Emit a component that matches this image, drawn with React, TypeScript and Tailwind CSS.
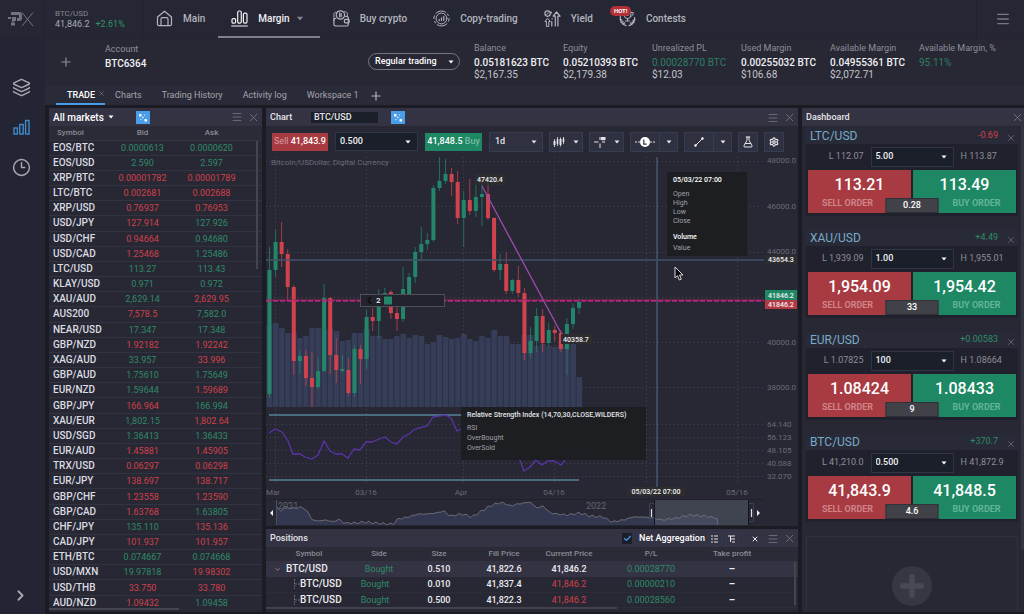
import React from "react";
import { Layers, Menu, X, Plus, ChevronRight, ChevronDown, Clock3, Check, Settings, FlaskConical } from "lucide-react";

// ---------------------------------------------------------------------------
// Types
// ---------------------------------------------------------------------------
type Quote = [symbol: string, bid: string, bidUp: number, ask: string, askUp: number];
// wick top, body top, body bottom, wick bottom, up
type Candle = [number, number, number, number, number];

interface Instrument {
  symbol: string;
  change: string;
  up: boolean;
  low: string;
  high: string;
  size: string;
  sell: string;
  buy: string;
  spread: string;
}

// ---------------------------------------------------------------------------
// Data
// ---------------------------------------------------------------------------
const QUOTES: Quote[] = [
  ["EOS/BTC", "0.0000613", 1, "0.0000620", 1],
  ["EOS/USD", "2.590", 1, "2.597", 1],
  ["XRP/BTC", "0.00001782", 0, "0.00001789", 0],
  ["LTC/BTC", "0.002681", 0, "0.002688", 0],
  ["XRP/USD", "0.76937", 0, "0.76953", 0],
  ["USD/JPY", "127.914", 0, "127.926", 1],
  ["USD/CHF", "0.94664", 0, "0.94680", 1],
  ["USD/CAD", "1.25468", 0, "1.25486", 1],
  ["LTC/USD", "113.27", 1, "113.43", 1],
  ["KLAY/USD", "0.971", 1, "0.972", 1],
  ["XAU/AUD", "2,629.14", 1, "2,629.95", 0],
  ["AUS200", "7,578.5", 0, "7,582.0", 1],
  ["NEAR/USD", "17.347", 1, "17.348", 1],
  ["GBP/NZD", "1.92182", 0, "1.92242", 0],
  ["XAG/AUD", "33.957", 1, "33.996", 0],
  ["GBP/AUD", "1.75610", 1, "1.75649", 1],
  ["EUR/NZD", "1.59644", 1, "1.59689", 0],
  ["GBP/JPY", "166.964", 0, "166.994", 1],
  ["XAU/EUR", "1,802.15", 1, "1,802.64", 0],
  ["USD/SGD", "1.36413", 1, "1.36433", 1],
  ["EUR/AUD", "1.45881", 0, "1.45905", 0],
  ["TRX/USD", "0.06297", 0, "0.06298", 0],
  ["EUR/JPY", "138.697", 0, "138.717", 0],
  ["GBP/CHF", "1.23558", 0, "1.23590", 0],
  ["GBP/CAD", "1.63768", 0, "1.63805", 1],
  ["CHF/JPY", "135.110", 1, "135.136", 0],
  ["CAD/JPY", "101.937", 0, "101.957", 0],
  ["ETH/BTC", "0.074667", 1, "0.074668", 1],
  ["USD/MXN", "19.97818", 1, "19.98302", 0],
  ["USD/THB", "33.750", 0, "33.780", 0],
  ["AUD/NZD", "1.09432", 0, "1.09458", 1],
];

const INSTRUMENTS: Instrument[] = [
  { symbol: "LTC/USD", change: "-0.69", up: false, low: "112.07", high: "113.87", size: "5.00", sell: "113.21", buy: "113.49", spread: "0.28" },
  { symbol: "XAU/USD", change: "+4.49", up: true, low: "1,939.09", high: "1,955.01", size: "1.00", sell: "1,954.09", buy: "1,954.42", spread: "33" },
  { symbol: "EUR/USD", change: "+0.00583", up: true, low: "1.07825", high: "1.08664", size: "100", sell: "1.08424", buy: "1.08433", spread: "9" },
  { symbol: "BTC/USD", change: "+370.7", up: true, low: "41,210.0", high: "41,872.9", size: "0.500", sell: "41,843.9", buy: "41,848.5", spread: "4.6" },
];

const METRICS = [
  { label: "Balance", value: "0.05181623 BTC", usd: "$2,167.35" },
  { label: "Equity", value: "0.05210393 BTC", usd: "$2,179.38" },
  { label: "Unrealized PL", value: "0.00028770 BTC", usd: "$12.03", green: true },
  { label: "Used Margin", value: "0.00255032 BTC", usd: "$106.68" },
  { label: "Available Margin", value: "0.04955361 BTC", usd: "$2,072.71" },
  { label: "Available Margin, %", value: "95.11%", usd: "", green: true },
];

const POSITIONS = [
  { size: "0.510", fill: "41,822.6", current: "41,846.2", pl: "0.00028770", parent: true },
  { size: "0.010", fill: "41,837.4", current: "41,846.2", pl: "0.00000210", parent: false },
  { size: "0.500", fill: "41,822.3", current: "41,846.2", pl: "0.00028560", parent: false },
];

const CANDLES: Candle[] = [
  [90, 113, 237, 241, 1], [73, 85, 113, 120, 1], [65, 85, 97, 110, 0], [92, 97, 130, 143, 0],
  [128, 130, 204, 218, 0], [194, 199, 204, 217, 1], [193, 199, 221, 229, 0], [195, 221, 230, 250, 0],
  [200, 214, 230, 232, 1], [127, 141, 214, 215, 1], [140, 141, 198, 217, 0], [181, 198, 213, 226, 0],
  [198, 212, 214, 216, 1], [201, 213, 236, 239, 0], [188, 192, 236, 240, 1], [188, 192, 202, 227, 0],
  [153, 160, 202, 212, 1], [151, 160, 164, 174, 0], [132, 137, 164, 181, 1], [131, 136, 140, 143, 1],
  [133, 135, 156, 162, 0], [150, 156, 162, 174, 0], [110, 132, 162, 165, 1], [116, 120, 138, 141, 1],
  [90, 95, 120, 126, 1], [70, 87, 95, 103, 1], [76, 83, 87, 93, 1], [28, 31, 83, 85, 1],
  [0, 24, 31, 34, 1], [2, 17, 24, 27, 1], [11, 17, 25, 39, 0], [14, 25, 61, 67, 0],
  [34, 43, 61, 90, 1], [22, 43, 54, 58, 0], [17, 40, 54, 60, 1], [28, 37, 40, 69, 1],
  [26, 37, 61, 63, 0], [60, 61, 113, 115, 0], [97, 107, 113, 123, 1], [95, 107, 134, 137, 0],
  [122, 123, 134, 137, 1], [109, 123, 136, 140, 0], [131, 136, 196, 203, 0], [170, 184, 196, 201, 1],
  [151, 159, 184, 195, 1], [152, 159, 186, 195, 0], [166, 173, 186, 190, 1], [169, 173, 176, 184, 0],
  [173, 176, 192, 195, 0], [161, 167, 192, 218, 1], [146, 151, 167, 172, 1], [142, 145, 151, 157, 1],
];

const VOLUME_TOPS = [
  168, 166, 171, 176, 176, 181, 179, 171, 171, 172, 172, 174, 184, 183, 176, 176, 172, 179, 179, 182, 182, 179, 177,
  181, 178, 179, 187, 185, 178, 180, 182, 181, 177, 182, 184, 179, 181, 173, 179, 179, 187, 187, 178, 178, 189, 187,
  189, 190, 188, 188, 187, 220,
];

const RSI =
  "3,276 9,272 16,275 22,284 27,297 34,297 39,300 46,302 52,298 58,284 64,294 70,297 76,297 82,301 88,292 94,293 100,285 106,285 113,282 119,280 125,285 131,287 137,280 143,277 149,272 161,269 167,260 179,258 185,261 191,274 196,272 204,270 216,269 224,285 234,295 241,301 246,298 253,301 258,314 264,310 270,303 276,308 282,304 288,304 295,308 301,301 307,296 313,292";

const HISTORY: [number, number][] = [
  [11, 350], [14, 355], [18, 350], [24, 351], [30, 351], [36, 350], [42, 355], [46, 363], [52, 364], [60, 363], [68, 365],
  [72, 362], [78, 366], [90, 366], [98, 365], [110, 366], [120, 367], [127, 367], [132, 362], [142, 360], [152, 357],
  [160, 357], [170, 356], [178, 354], [184, 359], [196, 357], [206, 360], [214, 355], [224, 349], [232, 346], [238, 346],
  [244, 349], [252, 347], [264, 345], [271, 351], [277, 349], [284, 356], [291, 357], [301, 358], [314, 356], [324, 359],
  [337, 360], [346, 365], [357, 363], [367, 360], [377, 360], [387, 361], [396, 363], [411, 361], [424, 358], [437, 359],
  [451, 361],
];

const STEP = 6.07;

// roughen the overview curve between its key points
function historyLine() {
  const out: string[] = [];
  for (let x = 11; x <= 451; x += 2) {
    let i = HISTORY.findIndex((p) => p[0] >= x);
    if (i < 1) i = 1;
    const [x0, y0] = HISTORY[i - 1];
    const [x1, y1] = HISTORY[i];
    const y = y0 + ((y1 - y0) * (x - x0)) / (x1 - x0);
    out.push(`${x},${(y + Math.sin(x * 2.3) * 0.6 + Math.sin(x * 0.9) * 0.6).toFixed(1)}`);
  }
  return out.join(" ");
}

// ---------------------------------------------------------------------------
// Icons
// ---------------------------------------------------------------------------
function Icon({ children, className = "size-[17px]" }: { children: React.ReactNode; className?: string }) {
  return (
    <svg viewBox="0 0 17 17" className={`shrink-0 ${className}`} fill="none" stroke="currentColor" strokeWidth="1.2" strokeLinecap="round" strokeLinejoin="round" aria-hidden="true">
      {children}
    </svg>
  );
}

const HomeIcon = () => (
  <Icon>
    <path d="M1.5 7 8.5 1.2 15.5 7v7.2a1.4 1.4 0 0 1-1.4 1.4H2.9a1.4 1.4 0 0 1-1.4-1.4z" />
    <path d="M5 15.4V9.2a1.5 1.5 0 0 1 1.5-1.5h4A1.5 1.5 0 0 1 12 9.2v6.2" />
  </Icon>
);

const MarginIcon = () => (
  <Icon>
    <rect x="1" y="8.6" width="3.6" height="4.6" rx="1.2" />
    <rect x="6.7" y="1" width="3.6" height="12.2" rx="1.4" />
    <rect x="12.4" y="3.2" width="3.6" height="10" rx="1.4" />
    <path d="M.7 16h15.6" />
  </Icon>
);

const WalletIcon = () => (
  <Icon>
    <path d="M2.6 8.4A1.6 1.6 0 0 0 .9 10v4.3A1.7 1.7 0 0 0 2.6 16h11.2a1.5 1.5 0 0 0 1.5-1.5V8a1.6 1.6 0 0 0-1.6-1.6h-1" />
    <circle cx="7.4" cy="5" r="4.2" />
    <path d="M6.5 3.2v3.6M6.5 3.2h1.2a.9.9 0 0 1 0 1.8H6.5m0 0H8a.9.9 0 0 1 0 1.8H6.5M11.5 1.6c2 0 2.9 1 2.9 2.4v2.4M.9 10.5V4.6c0-1.4.6-2.2 2-2.6" strokeWidth=".9" />
    <rect x="11.4" y="9.4" width="4.8" height="3.4" rx="1" />
  </Icon>
);

const CopyIcon = () => (
  <Icon>
    <circle cx="8.5" cy="8.5" r="5.4" strokeWidth="1" />
    <path d="M3 3.2a7.6 7.6 0 0 1 9.7-1M14 13.8a7.6 7.6 0 0 1-9.7 1M.9 8.5c0-1 .2-1.9.5-2.7M16.1 8.5c0 1-.2 1.9-.5 2.7M14.5 4l.8 1.5M2.5 13l-.8-1.5" strokeWidth="1" />
    <path d="M6.2 10.6V9.4M8.5 10.6V7.8M10.8 10.6V6.4" />
  </Icon>
);

const YieldIcon = () => (
  <Icon>
    <circle cx="3.6" cy="3.6" r="2.7" />
    <path d="m2.6 4.6 2-2" strokeWidth=".9" />
    <path d="M2.4 16v-4.5H.9l2.7-3.3 2.7 3.3H4.8V16z" strokeWidth="1" />
    <path d="M11.3 16V6.2H9.1L12.6 2l3.5 4.2h-2.2V16" />
    <path d="M7.8 16v-4.5M8.1 8.7v.2M7.3 2v1" />
  </Icon>
);

const ContestIcon = () => (
  <Icon>
    <path d="M5.2 1.5h6.6v3.8a3.3 3.3 0 0 1-6.6 0zM8.5 8.6v2.2M6.5 11h4M12 2.5h2.3c0 2.3-.8 3.6-2.6 3.8" strokeWidth="1" />
    <path d="m7.3 4 1.2-1 1.2 1-.4 1.5H7.7z" strokeWidth=".8" />
    <path d="M1.4 6.6c-.6 4.2 1.6 7.6 5.6 9M15.6 7.6c.2 3.8-2 6.8-5.6 8M1 9.2l2 .9M2 12.2l2.3-.3M4 14.4l1.7-1.6M16 9.8l-2 .8M15 12.6l-2.2-.4M13 14.6l-1.5-1.5" />
  </Icon>
);

const LinkBadge = () => (
  <button aria-label="Link panels" className="grid h-[13px] w-3.5 place-items-center bg-[#4a9de8] text-white">
    <svg viewBox="0 0 14 13" className="h-[13px] w-3.5" fill="currentColor">
      <rect x="3" y="3" width="2.5" height="2.5" rx=".6" />
      <rect x="8.5" y="8" width="2.5" height="2.5" rx=".6" />
      <rect x="6.2" y="5.8" width="1.4" height="1.4" rx=".4" />
      <rect x="8" y="3.5" width="1.2" height="1.2" opacity=".7" />
      <rect x="4.2" y="8" width="1.2" height="1.2" opacity=".7" />
    </svg>
  </button>
);

const Caret = ({ className = "h-1 w-1.5" }: { className?: string }) => (
  <svg viewBox="0 0 6 4" className={`shrink-0 ${className}`} fill="currentColor" aria-hidden="true">
    <path d="M.5.5h5L3 3.5z" />
  </svg>
);

function PanelActions({ menu = true, className = "ml-auto pr-0.5" }: { menu?: boolean; className?: string }) {
  return (
    <div className={`flex items-center gap-1 text-[#7b7b88] ${className}`}>
      {menu && (
        <button aria-label="Panel menu">
          <Menu size={12} strokeWidth={1.5} />
        </button>
      )}
      <button aria-label="Close panel">
        <X size={13} strokeWidth={1.5} />
      </button>
    </div>
  );
}

function Dropdown({ label, value, className }: { label: string; value: string; className: string }) {
  return (
    <div className={`relative ${className}`}>
      <select aria-label={label} defaultValue={value} className="block h-full w-full appearance-none border border-[#2e3547] bg-[#1b1f29] pl-1 text-[9px] font-medium text-[#f0f0f4]">
        <option>{value}</option>
      </select>
      <Caret className="pointer-events-none absolute right-[7px] top-2 h-1 w-1.5 text-white" />
    </div>
  );
}

// ---------------------------------------------------------------------------
// Header
// ---------------------------------------------------------------------------
const NAV = [
  { label: "Main", icon: HomeIcon },
  { label: "Margin", icon: MarginIcon, active: true },
  { label: "Buy crypto", icon: WalletIcon },
  { label: "Copy-trading", icon: CopyIcon },
  { label: "Yield", icon: YieldIcon },
  { label: "Contests", icon: ContestIcon, hot: true },
];

function Header() {
  return (
    <header className="flex h-[38px] shrink-0 bg-[#262735]">
      <a href="#" aria-label="Home page" className="flex w-[45px] items-center border-r border-[#20212d] pl-2 text-[#747480]">
        <svg viewBox="0 0 26 16" className="h-4 w-[26px]" fill="currentColor" aria-hidden="true">
          <path d="M3 1h8a3 3 0 0 1 3 3v3a3 3 0 0 1-3 3H9V7h2V4H3z" />
          <rect x="0" y="6" width="3" height="2" />
          <path d="M4 6h4v4H6v1H4z" />
          <rect x="3" y="11.5" width="4" height="3" />
          <path d="M14 1.5 25 15M25 1.5 14 15" fill="none" stroke="currentColor" strokeWidth="1" />
        </svg>
      </a>
      <div className="flex w-[98px] flex-col justify-center border-r border-[#20212d] pl-2.5 text-[9px] leading-[11px] text-[#aaaab2]">
        <span className="text-[8px] text-[#85858f]">BTC/USD</span>
        <span className="flex gap-1.5">
          41,846.2 <span className="text-[#2f9468]">+2.61%</span>
        </span>
      </div>
      <nav className="flex">
        {NAV.map((item) => (
          <a
            key={item.label}
            href="#"
            className={`relative flex items-center gap-2.5 text-[10px] font-medium ${
              item.active ? "border-b-2 border-[#80808b] pl-[13px] pr-4 text-[#f0f0f4]" : "px-[13px] pb-0.5 text-[#b4b4bd]"
            }`}
          >
            <item.icon />
            <span className="flex items-center gap-1.5">
              {item.label}
              {item.active && <Caret className="h-[5px] w-2 text-[#83838e]" />}
            </span>
            {item.hot && (
              <span className="absolute left-1 top-1.5 rounded-full bg-[#b23038] px-1 text-[6px] font-bold leading-[10px] text-white">HOT!</span>
            )}
          </a>
        ))}
      </nav>
      <button aria-label="Menu" className="ml-auto grid w-12 place-items-center border-l border-[#20212d] pl-1 text-[#787883]">
        <Menu size={16} strokeWidth={2} />
      </button>
    </header>
  );
}

function Sidebar() {
  return (
    <aside className="flex w-[45px] shrink-0 flex-col items-center bg-[#242534] pb-2.5 pr-0.5 pt-10 text-[#a9a9b4]">
      <button aria-label="Layouts">
        <Layers size={19} strokeWidth={1.8} />
      </button>
      <button aria-label="Charts" className="mt-[22px] text-[#4089c8]">
        <svg viewBox="0 0 17 17" className="size-[17px]" fill="none" stroke="currentColor" strokeWidth="1.4">
          <rect x="1" y="9" width="3.4" height="6" />
          <rect x="6.8" y="5.5" width="3.4" height="9.5" />
          <rect x="12.6" y="1.5" width="3.4" height="13.5" />
        </svg>
      </button>
      <button aria-label="History" className="mt-[22px]">
        <Clock3 size={19} strokeWidth={1.8} />
      </button>
      <button aria-label="Expand sidebar" className="mt-auto pr-0.5">
        <ChevronRight size={17} strokeWidth={2.5} />
      </button>
    </aside>
  );
}

function AccountBar() {
  return (
    <div className="flex h-12 shrink-0 border-t border-[#232430] bg-[#272834]">
      <button aria-label="Add account" className="ml-3.5 mt-4 self-start text-[#90909a]">
        <Plus size={14} strokeWidth={2} />
      </button>
      <div className="ml-8 mt-1 text-[9px] leading-3 text-[#8f8f99]">
        Account
        <div className="pt-[3px] text-[10px] font-medium text-[#f0f0f4]">BTC6364</div>
      </div>
      <div className="relative ml-auto mr-3.5 mt-3.5 h-[17px] w-[92px]">
        <select aria-label="Trading mode" className="block h-full w-full appearance-none rounded-full border border-[#75757f] pl-1.5 text-[9px] font-medium text-white">
          <option>Regular trading</option>
        </select>
        <Caret className="pointer-events-none absolute right-1.5 top-[7px] h-1 w-1.5 text-white" />
      </div>
      <dl className="flex pr-4 pt-[3px]">
        {METRICS.map((m) => (
          <div key={m.label} className="w-[89px] whitespace-nowrap text-[10px] leading-3">
            <dt className="pb-[3px] text-[9px] text-[#8f8f99]">{m.label}</dt>
            <dd className={m.green ? "text-[#2c7f61]" : "font-medium text-[#f0f0f4]"}>{m.value}</dd>
            <dd className="text-[#c4c4cb]">{m.usd}</dd>
          </div>
        ))}
      </dl>
    </div>
  );
}

function Tabs() {
  return (
    <div className="flex h-[19px] shrink-0 items-stretch bg-[#2a2b38] pl-[11px] text-[9px] text-[#a4a4ad]">
      <button className="flex items-center border-b-2 border-[#4a9de8] pl-[11px] pt-0.5 font-medium text-white">
        TRADE
        <X size={7} strokeWidth={2} className="mb-1 ml-[3px] text-[#85858f]" />
      </button>
      {["Charts", "Trading History", "Activity log", "Workspace 1"].map((t) => (
        <button key={t} className="px-2.5">
          {t}
        </button>
      ))}
      <button aria-label="Add workspace" className="text-[#b5b5bd]">
        <Plus size={14} strokeWidth={2} />
      </button>
    </div>
  );
}

// ---------------------------------------------------------------------------
// Markets
// ---------------------------------------------------------------------------
function Markets() {
  return (
    <section className="relative flex w-[213px] shrink-0 flex-col bg-[#272834] pb-0.5">
      <div className="flex h-[18px] shrink-0 items-center bg-[#343344] pl-1">
        <button className="mr-[22px] flex items-center gap-1 text-[10px] font-medium text-white">
          All markets <Caret />
        </button>
        <LinkBadge />
        <PanelActions />
      </div>
      <table className="h-0 w-full flex-1 table-fixed text-center text-[9px] leading-3">
        <colgroup>
          <col className="w-[59px]" />
          <col className="w-[69px]" />
          <col className="w-[69px]" />
          <col />
        </colgroup>
        <thead>
          <tr className="h-3.5 bg-[#2a2b37] text-[#8b8b95]">
            <th className="pl-2 text-left text-[8px] font-medium">Symbol</th>
            <th className="text-[8px] font-medium">Bid</th>
            <th className="text-[8px] font-medium">Ask</th>
            <th />
          </tr>
        </thead>
        <tbody>
          {QUOTES.map(([symbol, bid, bidUp, ask, askUp]) => (
            <tr key={symbol} className="border-t border-[#323340]">
              <td className="whitespace-nowrap pl-1 text-left text-[10px] font-medium text-[#dcdce2]">{symbol}</td>
              <td className={bidUp ? "text-[#2f8a67]" : "text-[#d0404a]"}>{bid}</td>
              <td className={askUp ? "text-[#2f8a67]" : "text-[#d0404a]"}>{ask}</td>
              <td />
            </tr>
          ))}
        </tbody>
      </table>
      <div className="absolute right-1 top-[33px] h-32 w-0.5 bg-[#454552]" />
      <div className="absolute bottom-0.5 left-0 h-0.5 w-[130px] bg-[#454552]" />
    </section>
  );
}

// ---------------------------------------------------------------------------
// Chart
// ---------------------------------------------------------------------------
const TOOL = "flex h-5 items-center border border-[#343d52] bg-[#2f3040] text-[#e4e4e9]";

function ChartToolbar() {
  return (
    <div className="flex h-[31px] shrink-0 items-center gap-1.5 pl-1.5 text-[9px]">
      <button className="h-[18px] w-14 whitespace-nowrap bg-[#a83a42] text-[#d99ca0]">
        Sell <span className="font-medium text-white">41,843.9</span>
      </button>
      <Dropdown label="Order size" value="0.500" className="ml-px h-[19px] w-[83px]" />
      <button className="ml-px h-[18px] w-[57px] whitespace-nowrap bg-[#1e8763] text-[#8fc7b3]">
        <span className="font-medium text-white">41,848.5</span> Buy
      </button>
      <button className={`${TOOL} ml-px w-[54px] justify-between px-[5px] font-medium`}>
        1d <Caret />
      </button>
      <button aria-label="Chart type" className={`${TOOL} w-[34px] justify-center gap-2`}>
        <svg viewBox="0 0 12 12" className="size-3" stroke="currentColor" fill="none">
          <path d="M1.5 3v8M4.5 1v9M7.5 1.5v9M10.5 1v7" strokeWidth=".8" />
          <path d="M1.5 5v4M7.5 3v6" strokeWidth="2" />
          <path d="M4.500 3v5M10.500 2.500v3.500" strokeWidth="1.6" />
        </svg>
        <Caret />
      </button>
      <button aria-label="Crosshair" className={`${TOOL} w-[35px] justify-center gap-2`}>
        <svg viewBox="0 0 12 12" className="size-3" stroke="currentColor" fill="none">
          <path d="M0 6h4.5M6 7.5V12M8 6h3M6 1v3" />
          <rect x="7" y="1" width="4.5" height="3.2" fill="currentColor" stroke="none" />
        </svg>
        <Caret />
      </button>
      <div className="flex">
        <button aria-label="Price labels" className={`${TOOL} w-[30px] justify-center`}>
          <svg viewBox="0 0 22 12" className="h-3 w-[22px]">
            <path d="M1 6h20" stroke="currentColor" strokeWidth="1.2" strokeDasharray="2 1" />
            <circle cx="11" cy="6" r="5" fill="#fff" />
            <path d="M9.8 3.5v4.7h2.8" fill="none" stroke="#2f3040" strokeWidth="1.2" />
          </svg>
        </button>
        <button aria-label="Label options" className={`${TOOL} w-[18px] justify-center border-l-0`}>
          <Caret />
        </button>
      </div>
      <div className="flex">
        <button aria-label="Trend line" className={`${TOOL} w-[30px] justify-center`}>
          <svg viewBox="0 0 10 10" className="size-2.5" stroke="currentColor" fill="currentColor">
            <path d="M1.5 8.5l7-7" />
            <circle cx="1.5" cy="8.5" r=".9" />
            <circle cx="8.5" cy="1.5" r=".9" />
          </svg>
        </button>
        <button aria-label="Drawing tools" className={`${TOOL} w-[18px] justify-center border-l-0`}>
          <Caret />
        </button>
      </div>
      <button aria-label="Studies" className={`${TOOL} w-5 justify-center`}>
        <FlaskConical size={12} strokeWidth={2} />
      </button>
      <button aria-label="Chart settings" className={`${TOOL} w-5 justify-center`}>
        <Settings size={10} strokeWidth={3} />
      </button>
    </div>
  );
}

function PriceChart() {
  const history = historyLine();
  return (
    <svg viewBox="0 0 532 369" className="block h-full w-full text-[8px]" preserveAspectRatio="xMinYMin meet" role="img" aria-label="BTC/USD daily candles">
      {/* grid */}
      <g stroke="#454653" strokeWidth="1" strokeDasharray="1 3">
        {[9, 100, 197, 288, 380, 471].map((x) => (
          <path key={x} d={`M${x}.5 0V326`} />
        ))}
        {[4, 49, 95, 140, 185, 230, 267, 280, 293, 306, 319].map((y) => (
          <path key={y} d={`M0 ${y}.5H498`} />
        ))}
      </g>
      <text x="5" y="8" fill="#6a6b75">
        Bitcoin/USDollar, Digital Currency
      </text>

      {/* volume */}
      {VOLUME_TOPS.map((top, i) => (
        <g key={i}>
          <rect x={0.5 + i * STEP} y={top} width={STEP} height={250 - top} fill="#363d57" />
          <path d={`M${0.5 + i * STEP} ${top}V250`} stroke="#2c3046" strokeWidth="1" />
        </g>
      ))}

      {/* candles */}
      {CANDLES.map(([high, top, bottom, low, up], i) => {
        const x = 3.5 + i * STEP;
        const color = up ? "#23866a" : "#d0434d";
        return (
          <g key={i}>
            <path d={`M${x} ${high}V${low}`} stroke={color} strokeWidth="1" opacity=".75" />
            <rect x={x - 2} y={top} width="4" height={bottom - top} fill={color} />
          </g>
        );
      })}

      {/* crosshair, last price, trend line */}
      <path d="M0 103H498" stroke="#42526a" strokeWidth="1.5" />
      <path d="M391 0V330" stroke="#3d4b60" strokeWidth="2" />
      <path d="M0 143H498" stroke="#a12a50" strokeWidth="1" />
      <path d="M0 144H498" stroke="#bd2389" strokeWidth="1.5" strokeDasharray="5 2" />
      <path d="M216 29 295 176" stroke="#a04bb0" strokeWidth="1.3" />

      {/* rsi */}
      <path d="M3 258H313M3 323H313" stroke="#55819a" strokeWidth="1.5" />
      <polyline points={RSI} fill="none" stroke="#5a33a6" strokeWidth="1.3" />

      {/* axis labels */}
      <g fill="#6a6b75">
        <text x="501" y="6">48000.0</text>
        <text x="501" y="52">46000.0</text>
        <text x="501" y="97">44000.0</text>
        <text x="501" y="188">40000.0</text>
        <text x="501" y="233">38000.0</text>
        <text x="501" y="270">64.140</text>
        <text x="501" y="283">56.123</text>
        <text x="501" y="296">48.105</text>
        <text x="501" y="309">40.088</text>
        <text x="501" y="322">32.070</text>
      </g>
      <g fill="#6a6b75" textAnchor="middle">
        <text x="7" y="338">Mar</text>
        <text x="100" y="338">03/16</text>
        <text x="195" y="338">Apr</text>
        <text x="288" y="338">04/16</text>
        <text x="471" y="338">05/16</text>
      </g>
      <g fill="#f0f0f4" className="text-[7px] font-medium">
        <rect x="499" y="98" width="32" height="9" fill="#2d2d2f" />
        <text x="502" y="105">43654.3</text>
        <rect x="499" y="133" width="32" height="10" fill="#1e8763" />
        <text x="502" y="141">41846.2</text>
        <rect x="499" y="143" width="32" height="9" fill="#b33a42" />
        <text x="502" y="150">41846.2</text>
        <rect x="361" y="330" width="58" height="9" fill="#2d2d2f" />
        <text x="390" y="337" textAnchor="middle">05/03/22 07:00</text>
        <rect x="209" y="17" width="30" height="11" fill="#2d2d2f" />
        <text x="211" y="25">47420.4</text>
        <rect x="295" y="177" width="31" height="10" fill="#2d2d2f" />
        <text x="297" y="185">40358.7</text>
        <rect x="94.5" y="137.5" width="84" height="12" fill="#22232c" stroke="#50505a" />
        <path d="m105 140-3 3.5 3 3.5" fill="none" stroke="#0c0c10" strokeWidth="1.3" />
        <text x="110" y="146" className="text-[8px]">2</text>
        <rect x="118" y="139.5" width="8" height="8" fill="#23866a" />
      </g>

      {/* overview */}
      <path d="M0 342.5H498" stroke="#20212a" />
      <polygon points={`11,368 ${history} 451,368`} fill="#343750" />
      <rect x="389" y="343" width="93" height="25" fill="#5a5d6c" opacity=".5" />
      <polyline points={`${history} 452,368`} fill="none" stroke="#70717c" strokeWidth=".9" />
      <path d="M10.5 343V368" stroke="#4b5068" />
      <text x="12" y="352" fill="#62636e" className="text-[9px]">2021</text>
      <text x="320" y="352" fill="#62636e" className="text-[9px]">2022</text>
      <path d="M388.5 343V368M482.5 343V368" stroke="#14151c" />
      <path d="M388 346.5H383.5V364.5H388M483 346.5H487.5V364.5H483" fill="none" stroke="#354257" />
      <path d="M385.5 352V360M485.5 352V360" stroke="#e0e0e4" strokeWidth="1.2" />
      <path d="M7 353v6l-3-3zM491 353v6l3-3z" fill="#f0f0f4" />
    </svg>
  );
}

function ChartPanel() {
  return (
    <section className="flex min-h-0 flex-1 flex-col bg-[#272834]">
      <div className="flex h-[18px] shrink-0 items-center bg-[#343344] pl-1 pt-px text-[9px] font-medium text-[#e4e4e9]">
        <h2 className="w-10">Chart</h2>
        <input aria-label="Instrument" defaultValue="BTC/USD" className="mr-3 h-[13px] w-[69px] border border-[#2e3547] bg-[#1b1f29] px-[3px]" />
        <LinkBadge />
        <PanelActions />
      </div>
      <ChartToolbar />
      <div className="relative min-h-0 flex-1">
        <PriceChart />
        <div className="absolute left-[401px] top-[15px] h-[84px] w-20 bg-[#1c1d21]/95 px-1.5 pt-1 text-[7px] leading-[9px] text-[#a0a0a6]">
          <p className="pb-[5px] font-medium text-white">05/03/22 07:00</p>
          <p>Open</p>
          <p>High</p>
          <p>Low</p>
          <p>Close</p>
          <p className="pb-0.5 pt-[7px] font-medium text-white">Volume</p>
          <p>Value</p>
        </div>
        <div className="absolute left-[195px] top-[250px] h-[53px] w-[185px] bg-[#1c1d21]/95 px-1.5 pt-[3px] text-[7px] leading-[10px] text-[#a0a0a6]">
          <p className="whitespace-nowrap pb-[3px] font-medium text-[#e4e4e9]">Relative Strength Index (14,70,30,CLOSE,WILDERS)</p>
          <p>RSI</p>
          <p>OverBought</p>
          <p>OverSold</p>
        </div>
        <svg viewBox="0 0 10 15" className="absolute left-[408px] top-[109px] h-[15px] w-2.5">
          <path d="M1 1v11l2.5-2.3L5.3 14l2-.8L5.5 9H9z" fill="#0b0b0e" stroke="#d8d8dc" strokeWidth="1" />
        </svg>
      </div>
    </section>
  );
}

// ---------------------------------------------------------------------------
// Positions
// ---------------------------------------------------------------------------
function Positions() {
  return (
    <section className="relative h-[83px] shrink-0 bg-[#272834]">
      <div className="flex h-[18px] items-center bg-[#343344] pl-1 pt-px text-[9px] font-medium text-[#e4e4e9]">
        <h2>Positions</h2>
        <label className="relative ml-auto flex items-center gap-[7px] text-white">
          <input type="checkbox" defaultChecked className="h-[11px] w-2.5 appearance-none bg-[#1b1f29]" />
          <Check size={9} strokeWidth={3} className="pointer-events-none absolute left-px text-[#4a9de8]" />
          Net Aggregation
        </label>
        <button aria-label="Flat list" className="ml-[3px] grid h-3.5 w-3.5 place-items-center border border-[#33384c]">
          <svg viewBox="0 0 8 8" className="size-2" stroke="currentColor">
            <path d="M0 1h2M3 1h4M0 4h2M3 4h4M0 7h2M3 7h4" />
          </svg>
        </button>
        <button aria-label="Tree list" className="ml-[3px] grid h-3.5 w-3.5 place-items-center border border-[#33384c]">
          <svg viewBox="0 0 8 8" className="size-2" stroke="currentColor" fill="none">
            <path d="M0 1h7M2.5 1v6M3 4h4M4 7h3" />
          </svg>
        </button>
        <button aria-label="Close all positions" className="ml-3">
          <X size={8} strokeWidth={3} />
        </button>
        <PanelActions className="ml-2 pr-0.5" />
      </div>
      <table className="w-full table-fixed text-center text-[9px] leading-3 text-[#ececf0]">
        <colgroup>
          <col className="w-[86px]" />
          <col className="w-[54px]" />
          <col className="w-[66px]" />
          <col className="w-16" />
          <col className="w-[66px]" />
          <col className="w-[98px]" />
          <col className="w-16" />
          <col />
        </colgroup>
        <thead>
          <tr className="h-3.5 bg-[#2a2b37] text-[8px] text-[#8b8b95]">
            {["Symbol", "Side", "Size", "Fill Price", "Current Price", "P/L", "Take profit", ""].map((h) => (
              <th key={h} className="whitespace-nowrap font-medium">
                {h}
              </th>
            ))}
          </tr>
        </thead>
        <tbody>
          {POSITIONS.map((p) => (
            <tr key={p.size} className={p.parent ? "h-4 bg-[#343344]" : "h-[15px] border-b border-[#2c2d39]"}>
              <td className="text-left text-[10px] font-medium">
                <span className={p.parent ? "flex items-center gap-[5px] pl-2" : "flex items-center pl-7"}>
                  {p.parent ? (
                    <ChevronDown size={7} strokeWidth={3} className="text-[#8b8b95]" />
                  ) : (
                    <svg viewBox="0 0 6 10" className="h-2.5 w-1.5" stroke="#6d6d78">
                      <path d="M.5 0v10M1 5h5" strokeDasharray="2 1" />
                    </svg>
                  )}
                  BTC/USD
                </span>
              </td>
              <td className={p.parent ? "text-[#2f8a67]" : "pr-2 text-[#2f8a67]"}>Bought</td>
              <td className="font-medium">{p.size}</td>
              <td className="font-medium">{p.fill}</td>
              <td className={p.parent ? "font-medium" : "text-[#d0404a]"}>{p.current}</td>
              <td className="text-[#2f8a67]">{p.pl}</td>
              <td className="text-[10px] font-bold">–</td>
              <td />
            </tr>
          ))}
        </tbody>
      </table>
      <div className="absolute bottom-[3px] left-0 h-0.5 w-[351px] bg-[#42424f]" />
      <div className="absolute right-0.5 top-[33px] h-[43px] w-0.5 bg-[#454552]" />
    </section>
  );
}

// ---------------------------------------------------------------------------
// Dashboard
// ---------------------------------------------------------------------------
function InstrumentCard({ item }: { item: Instrument }) {
  return (
    <article className="bg-[#20212c] pb-[3px]">
      <div className="flex h-4 items-center bg-[#292a37] pl-1">
        <h3 className="text-xs leading-4 text-[#78aac8]">{item.symbol}</h3>
        <span className={`ml-auto text-[9px] ${item.up ? "text-[#2f8a67]" : "text-[#d0404a]"}`}>{item.change}</span>
        <button aria-label={`Remove ${item.symbol}`} className="ml-2 mr-0.5 pt-1 text-[#73737e]">
          <X size={10} strokeWidth={1.8} />
        </button>
      </div>
      <div className="flex h-[26px] items-center justify-center gap-[7px] text-[9px] text-[#8e8e98]">
        <span className="flex-1 text-right">L {item.low}</span>
        <Dropdown label={`${item.symbol} size`} value={item.size} className="h-5 w-[83px]" />
        <span className="flex-1">H {item.high}</span>
      </div>
      <div className="relative grid grid-cols-2 gap-0.5 px-0.5 text-base font-medium leading-[18px] text-white">
        <button className="h-[43px] bg-[#a83a42] pt-1.5">
          {item.sell}
          <span className="block pr-6 text-[9px] font-bold leading-[19px] text-[#cf8489]">SELL ORDER</span>
        </button>
        <button className="h-[43px] bg-[#1e8763] pt-1.5">
          {item.buy}
          <span className="block pl-6 text-[9px] font-bold leading-[19px] text-[#62b598]">BUY ORDER</span>
        </button>
        <span className="absolute bottom-0 left-1/2 h-[15px] w-[53px] -translate-x-1/2 border border-[#30303a] bg-[#414247] text-center text-[9px] leading-[13px]">
          {item.spread}
        </span>
      </div>
    </article>
  );
}

function Dashboard() {
  return (
    <section className="relative flex w-[222px] shrink-0 flex-col overflow-hidden bg-[#272834]">
      <div className="flex h-[18px] shrink-0 items-center bg-[#343344] pl-1 pt-px text-[9px] font-medium text-[#e4e4e9]">
        <h2>Dashboard</h2>
        <PanelActions menu={false} className="ml-auto" />
      </div>
      <div className="flex min-h-0 flex-1 flex-col gap-3.5 pl-1 pr-1.5 pt-0.5">
        {INSTRUMENTS.map((item) => (
          <InstrumentCard key={item.symbol} item={item} />
        ))}
        <button aria-label="Add instrument" className="flex min-h-0 flex-1 items-start justify-center border border-b-0 border-[#30313d] pt-[29px]">
          <span className="grid size-10 place-items-center rounded-full bg-[#363743] text-[#484955]">
            <Plus size={32} strokeWidth={4} />
          </span>
        </button>
      </div>
      <div className="absolute right-0 top-[18px] h-[424px] w-[3px] bg-[#343542]" />
    </section>
  );
}

// ---------------------------------------------------------------------------
// Page
// ---------------------------------------------------------------------------
export default function App() {
  return (
    <div className="flex h-screen flex-col overflow-hidden bg-[#1b1b24] font-[Roboto,'Liberation_Sans',sans-serif]">
      <Header />
      <div className="flex min-h-0 flex-1">
        <Sidebar />
        <main className="flex min-w-0 flex-1 flex-col">
          <AccountBar />
          <Tabs />
          <div className="flex min-h-0 flex-1 gap-1 pb-0.5 pl-1 pt-[3px]">
            <Markets />
            <div className="flex min-w-0 flex-1 flex-col gap-[3px]">
              <ChartPanel />
              <Positions />
            </div>
            <Dashboard />
          </div>
        </main>
      </div>
    </div>
  );
}
